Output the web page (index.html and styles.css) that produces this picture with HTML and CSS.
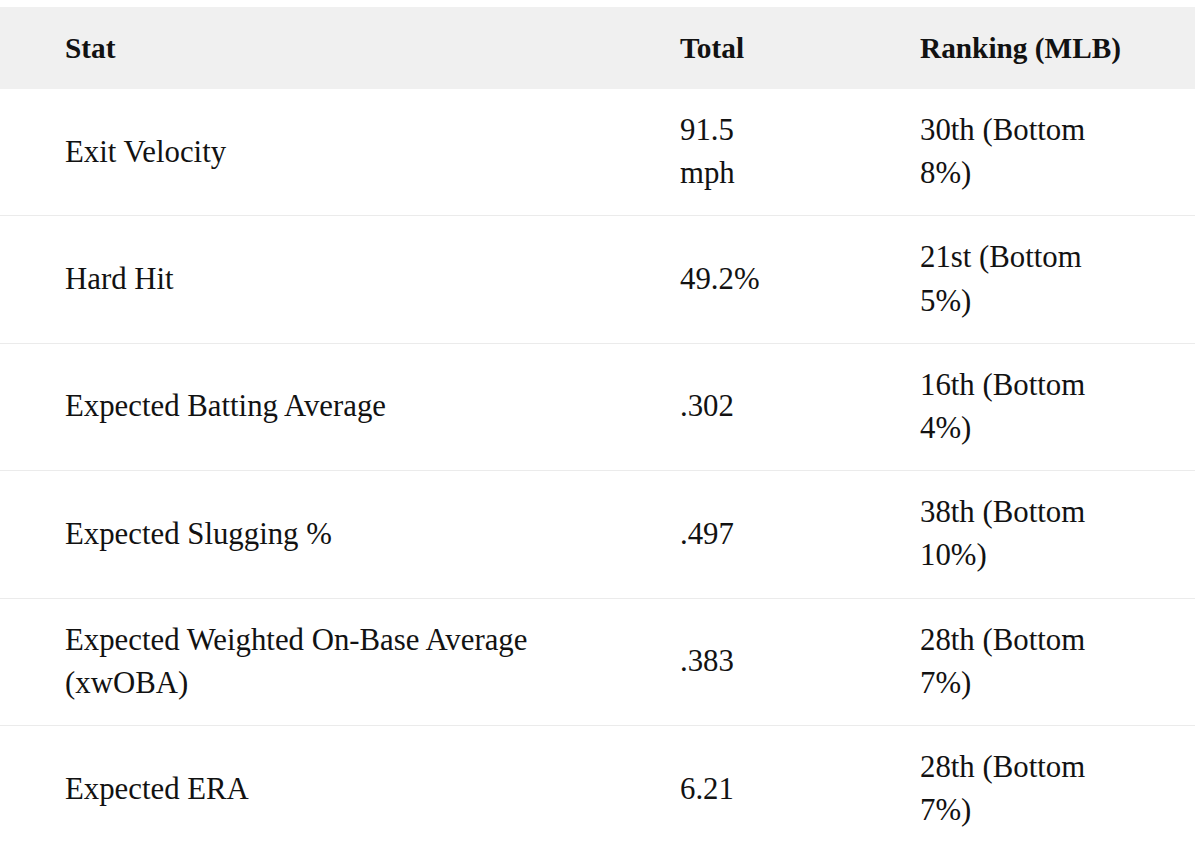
FILE: index.html
```html
<!DOCTYPE html>
<html lang="en">
<head>
<meta charset="utf-8">
<title>Statcast Table</title>
<link rel="stylesheet" href="styles.css">
</head>
<body>
<table class="stats">
  <colgroup>
    <col class="c-stat">
    <col class="c-total">
    <col class="c-rank">
  </colgroup>
  <thead>
    <tr>
      <th>Stat</th>
      <th>Total</th>
      <th>Ranking (MLB)</th>
    </tr>
  </thead>
  <tbody>
    <tr><td>Exit Velocity</td><td>91.5 mph</td><td>30th (Bottom 8%)</td></tr>
    <tr><td>Hard Hit</td><td>49.2%</td><td>21st (Bottom 5%)</td></tr>
    <tr><td>Expected Batting Average</td><td>.302</td><td>16th (Bottom 4%)</td></tr>
    <tr><td>Expected Slugging %</td><td>.497</td><td>38th (Bottom 10%)</td></tr>
    <tr><td>Expected Weighted On-Base Average (xwOBA)</td><td>.383</td><td>28th (Bottom 7%)</td></tr>
    <tr><td>Expected ERA</td><td>6.21</td><td>28th (Bottom 7%)</td></tr>
  </tbody>
</table>
</body>
</html>
```

FILE: styles.css
```css
html, body {
  margin: 0;
  background: #ffffff;
}
body {
  padding-top: 7px;
  font-family: "Liberation Serif", "Times New Roman", serif;
  color: #121212;
}
.stats {
  width: 1195px;
  table-layout: fixed;
  border-collapse: collapse;
  font-size: 30.8px;
  line-height: 43.2px;
}
.c-stat { width: 615px; }
.c-total { width: 240px; }
.c-rank { width: 340px; }
.stats th {
  background: #f0f0f0;
  text-align: left;
  font-weight: 700;
  font-size: 29.3px;
  padding: 19.6px 65px 19.2px;
}
.stats td {
  padding: 20px 65px;
  border-bottom: 1px solid #ebebeb;
  vertical-align: middle;
}
```
